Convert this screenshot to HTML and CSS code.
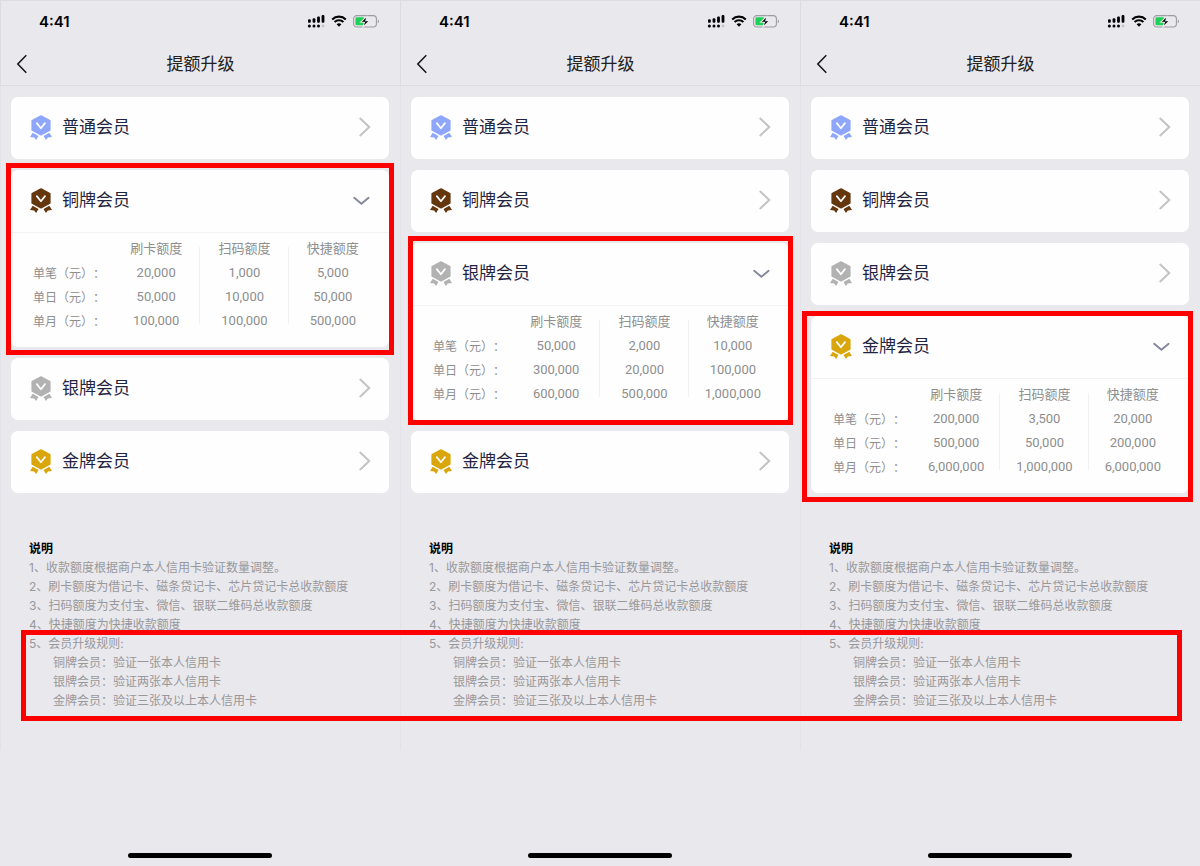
FILE: index.html
```html
<!DOCTYPE html>
<html lang="zh-CN">
<head>
    <meta charset="UTF-8">
    <meta name="viewport" content="width=device-width, initial-scale=1.0">
    <title>提额升级</title>
    <link rel="stylesheet" href="styles.css">
</head>
<body>
    <svg class="sprite" aria-hidden="true">
        <symbol id="icon-back" viewBox="0 0 12 20">
            <path d="M10.3 1.2L1.8 10l8.5 8.8" fill="none" stroke="#111" stroke-width="1.5"/>
        </symbol>
        <symbol id="icon-right" viewBox="0 0 12 20">
            <path d="M1.3 1.6L10.2 10l-8.9 8.4" fill="none" stroke="#c3c3c5" stroke-width="2" stroke-linecap="round"/>
        </symbol>
        <symbol id="icon-down" viewBox="0 0 18 12">
            <path d="M1.2 3.8L8.4 9.8l7.2-6" fill="none" stroke="#85889c" stroke-width="1.9" stroke-linecap="round"/>
        </symbol>
        <symbol id="icon-medal" viewBox="0 0 22 25">
            <path d="M11 1l8.8 4.7v9.4L11 19.7l-8.8-4.6V5.7z" fill="currentColor" stroke="currentColor" stroke-width="1.6" stroke-linejoin="round"/>
            <path d="M2.7 17.8l5.8 3.1-2.4 4-2-2.5L0 22zM19.3 17.8l-5.8 3.1 2.4 4 2-2.5L22 22z" fill="currentColor"/>
            <path d="M6.8 8.1l4.1 5.2 4.1-5.2" fill="none" stroke="#fff" stroke-width="1.7" stroke-linecap="round" stroke-linejoin="round"/>
        </symbol>
        <symbol id="icon-signal" viewBox="0 0 18 13">
            <g fill="#000">
                <rect x="1" y="4.2" width="2.8" height="3.6" rx="1"/>
                <rect x="5.6" y="3.2" width="2.8" height="4.6" rx="1"/>
                <rect x="10.1" y="1.6" width="2.8" height="6.2" rx="1"/>
                <rect x="14.6" y="0" width="2.8" height="7.8" rx="1"/>
                <circle cx="2.4" cy="11" r="1.5"/>
                <circle cx="7" cy="11" r="1.5"/>
                <circle cx="11.5" cy="11" r="1.5"/>
            </g>
            <circle cx="16" cy="11" r="1.4" fill="#c4c4ca"/>
        </symbol>
        <symbol id="icon-wifi" viewBox="0 0 16 12">
            <path d="M1.2 4.4a9.7 9.7 0 0 1 13.6 0M3.6 7a6.3 6.3 0 0 1 8.8 0" fill="none" stroke="#000" stroke-width="2.1"/>
            <path d="M5.6 9.3a3.5 3.5 0 0 1 4.8 0L8 11.8z" fill="#000"/>
        </symbol>
        <symbol id="icon-battery" viewBox="0 0 27 13">
            <rect x=".6" y=".6" width="22.8" height="11.4" rx="3.2" fill="none" stroke="#9b9ba0" stroke-width="1.1"/>
            <path d="M24.8 4.4c1.6.6 1.6 3.3 0 3.9z" fill="#9b9ba0"/>
            <rect x="2.4" y="2.3" width="8.6" height="8" rx="1.4" fill="#1fd058"/>
            <path d="M14.3.8L7.7 7.2h3.7l-1.5 4.9 6.8-6.5h-3.9z" fill="#000" stroke="#e9e8ed" stroke-width="1.1"/>
        </symbol>
    </svg>

    <div class="board" id="board"></div>

    <script src="app.js"></script>
</body>
</html>
```

FILE: styles.css
```css
* {
    box-sizing: border-box;
}
body {
    margin: 0;
    background: #e9e8ed;
    font-family: Inter, "Noto Sans CJK SC", sans-serif;
    color: #1f2440;
}
button {
    border: none;
    background: none;
    padding: 0;
    font: inherit;
    color: inherit;
    cursor: pointer;
}
svg {
    display: block;
    flex: none;
}
.sprite {
    display: none;
}
.board {
    position: relative;
    display: grid;
    grid-template-columns: repeat(3, 1fr);
    min-height: 100vh;
}
.phone {
    display: flex;
    flex-direction: column;
}

/* status bar and title */
.top {
    border: 1px solid #dddce4;
    border-right: none;
}
.status {
    display: flex;
    align-items: center;
    height: 42px;
    padding: 0 20px 2px 38px;
    gap: 6px;
}
.time {
    margin-right: auto;
    font-size: 15px;
    font-weight: 600;
    color: #000;
}
.signal {
    width: 18px;
    height: 13px;
}
.wifi {
    width: 16px;
    height: 12px;
}
.battery {
    width: 27px;
    height: 13px;
}
.nav {
    display: grid;
    grid-template-columns: 40px 1fr 40px;
    align-items: center;
    height: 42px;
}
.back {
    padding-left: 15px;
}
.back svg {
    width: 12px;
    height: 20px;
}
.nav h1 {
    margin: 0;
    text-align: center;
    font-size: 17px;
    line-height: 24px;
    font-weight: 400;
    color: #222;
}

/* level cards */
.content {
    padding: 11px 11px 40px 10px;
    border-left: 1px solid #e3e2e8;
}
.cards {
    display: flex;
    flex-direction: column;
    gap: 11px;
}
.card {
    position: relative;
    background: #fefefe;
    border-radius: 7px;
}
.card-head {
    display: flex;
    align-items: center;
    width: 100%;
    height: 62px;
    padding: 0 18px 2px 19px;
    gap: 10px;
    font-size: 17px;
    line-height: 24px;
    text-align: left;
}
.name {
    flex: 1;
}
.medal {
    width: 22px;
    height: 25px;
}
.normal { color: #8fa6fd; }
.bronze { color: #64370f; }
.silver { color: #b2b2b2; }
.gold { color: #d9a60b; }
.right {
    width: 12px;
    height: 20px;
}
.down {
    width: 18px;
    height: 12px;
}

/* quota table */
.quota {
    padding: 4px 12px 14px 0;
    border-top: 1px solid #f3f3f5;
}
.quota table {
    width: 100%;
    table-layout: fixed;
    border-collapse: collapse;
    font-family: Roboto, "Noto Sans CJK SC", sans-serif;
    font-size: 13px;
    line-height: 24px;
    color: #8e8e8e;
}
.quota th,
.quota td {
    height: 24px;
    padding: 0;
    font-weight: 400;
    text-align: center;
    background: linear-gradient(#f1f1f3, #f1f1f3) right top / 1px 100% no-repeat;
}
.quota .label {
    width: 101px;
    padding: 2px 0 0 22px;
    font-size: 12px;
    line-height: 22px;
    text-align: left;
    white-space: nowrap;
    text-spacing-trim: space-all;
    background: none;
}
.quota thead th {
    background-position: right bottom;
    background-size: 1px 14px;
}
.quota tbody tr:last-child td {
    background-size: 1px 15px;
}
.quota tr > :last-child,
.quota tbody tr:last-child td:last-child {
    background: none;
}

/* notes */
.notes {
    padding: 46px 0 0 18px;
    font-size: 12px;
    line-height: 19px;
    color: #98989b;
}
.notes h2 {
    margin: 0;
    font-size: 12px;
    font-weight: 700;
    color: #000;
}
.notes p {
    margin: 0;
}
.notes .sub {
    padding-left: 24px;
}

.home {
    width: 144px;
    height: 5px;
    margin: auto auto 8px;
    border-radius: 3px;
    background: #000;
}

/* red marks over the screens */
.mark {
    position: absolute;
    border: 5px solid #f00;
    pointer-events: none;
    z-index: 1;
}
.mark-bronze {
    inset: -7px -5px -8px;
}
.mark-silver {
    inset: -7px -4px -5px -3px;
}
.mark-gold {
    inset: -5px -4px -9px -9px;
}
.mark-rules {
    top: 630px;
    left: 21px;
    right: 18px;
    height: 91px;
}
```

FILE: app.js
```js
const levels = [
    { id: 'normal', name: '普通会员' },
    { id: 'bronze', name: '铜牌会员', quota: [
        ['20,000', '1,000', '5,000'],
        ['50,000', '10,000', '50,000'],
        ['100,000', '100,000', '500,000']
    ] },
    { id: 'silver', name: '银牌会员', quota: [
        ['50,000', '2,000', '10,000'],
        ['300,000', '20,000', '100,000'],
        ['600,000', '500,000', '1,000,000']
    ] },
    { id: 'gold', name: '金牌会员', quota: [
        ['200,000', '3,500', '20,000'],
        ['500,000', '50,000', '200,000'],
        ['6,000,000', '1,000,000', '6,000,000']
    ] }
];
const periods = ['单笔（元）：', '单日（元）：', '单月（元）：'];

function icon(name, cls) {
    return `<svg class="${cls}" aria-hidden="true"><use href="#icon-${name}"/></svg>`;
}

function quotaTable(quota) {
    const rows = quota.map((row, i) => `
        <tr>
            <th class="label" scope="row">${periods[i]}</th>
            ${row.map(value => `<td>${value}</td>`).join('')}
        </tr>`).join('');
    return `
        <div class="quota">
            <table>
                <thead>
                    <tr>
                        <th class="label"></th>
                        <th scope="col">刷卡额度</th>
                        <th scope="col">扫码额度</th>
                        <th scope="col">快捷额度</th>
                    </tr>
                </thead>
                <tbody>${rows}</tbody>
            </table>
        </div>`;
}

function card(level, open) {
    return `
        <section class="card">
            <button class="card-head" type="button" aria-expanded="${open}">
                ${icon('medal', 'medal ' + level.id)}
                <span class="name">${level.name}</span>
                ${open ? icon('down', 'down') : icon('right', 'right')}
            </button>
            ${open ? quotaTable(level.quota) + `<div class="mark mark-${level.id}"></div>` : ''}
        </section>`;
}

function phone(openId) {
    return `
        <div class="phone">
            <header class="top">
                <div class="status">
                    <span class="time">4:41</span>
                    ${icon('signal', 'signal')}
                    ${icon('wifi', 'wifi')}
                    ${icon('battery', 'battery')}
                </div>
                <div class="nav">
                    <button class="back" type="button" aria-label="返回">${icon('back', '')}</button>
                    <h1>提额升级</h1>
                </div>
            </header>
            <main class="content">
                <div class="cards">
                    ${levels.map(level => card(level, level.id === openId)).join('')}
                </div>
                <div class="notes">
                    <h2>说明</h2>
                    <p>1、收款额度根据商户本人信用卡验证数量调整。</p>
                    <p>2、刷卡额度为借记卡、磁条贷记卡、芯片贷记卡总收款额度</p>
                    <p>3、扫码额度为支付宝、微信、银联二维码总收款额度</p>
                    <p>4、快捷额度为快捷收款额度</p>
                    <p>5、会员升级规则:</p>
                    <p class="sub">铜牌会员：验证一张本人信用卡</p>
                    <p class="sub">银牌会员：验证两张本人信用卡</p>
                    <p class="sub">金牌会员：验证三张及以上本人信用卡</p>
                </div>
            </main>
            <div class="home"></div>
        </div>`;
}

document.getElementById('board').innerHTML =
    ['bronze', 'silver', 'gold'].map(phone).join('') +
    '<div class="mark mark-rules"></div>';
```
